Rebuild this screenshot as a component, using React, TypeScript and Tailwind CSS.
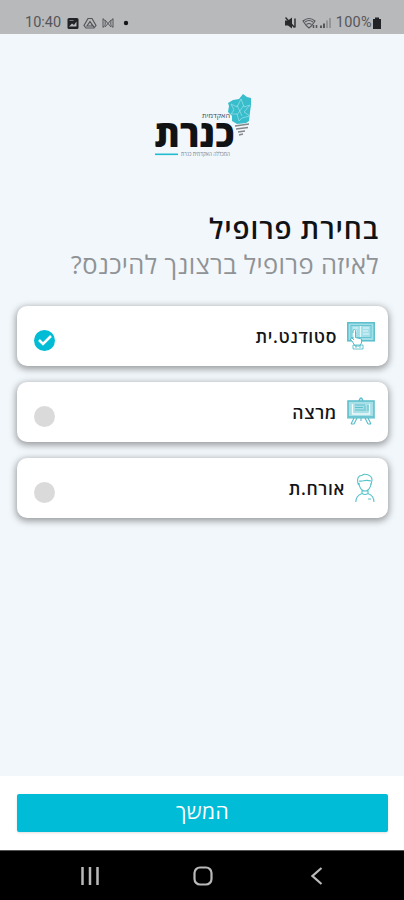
import { useState } from 'react';

const CYAN = '#00bcd7';

function StatusBar() {
  return (
    <header className="flex h-[34px] items-start bg-[#b8b9bb] pt-[14px] text-[#55565a]">
      <span className="ml-[25px] w-[42px] whitespace-nowrap font-[Roboto] text-[14.5px] leading-[18px]">10:40</span>
      <svg width="64" height="18" viewBox="0 0 64 18" fill="none" stroke="currentColor">
        <rect x="0.5" y="4" width="11" height="11" rx="1.5" fill="#222327" stroke="none" />
        <path d="M2 12.5l3-3 2 1.5 2.5-3.5v5z" fill="#b8b9bb" stroke="none" />
        <path d="M2.5 6.5h4" stroke="#77787a" />
        <path d="M21 4.5h4l4 7-2 2.5h-8l-2-2.5zM23 7.5l-3 4.5h6zM24 9.5l3 3.5" strokeWidth="1.2" />
        <path d="M36 4.5v9M36 5c3 0 3 8 0 8M46 4.5v9M46 5c-3 0-3 8 0 8M38 6l6 7M44 6l-6 7" strokeWidth="1" />
        <circle cx="59" cy="9" r="2.2" fill="#151619" stroke="none" />
      </svg>
      <svg className="ml-auto" width="50" height="18" viewBox="0 0 50 18" fill="none" stroke="currentColor">
        <path d="M0 6.5h3l4-3v11l-4-3H0z" fill="#292a2d" stroke="none" />
        <path d="M0.5 3.5l9 10M10 4.5v9" stroke="#292a2d" strokeWidth="1.4" />
        <path d="M18 7q6-5 12 0-3 5-6 7-3-2-6-7zM20 8q4-3 8 0M21.5 10.5q2.5-2 5 0" strokeWidth="1.1" />
        <path d="M28.5 11v3M31.5 11v3" strokeWidth="1.5" />
        <path d="M36 11.5v2.5M39 9.5v4.500" strokeWidth="2" />
        <path d="M42 6.5v7.5M45 4v10" stroke="#88898c" strokeWidth="1.5" />
      </svg>
      <span className="ml-px whitespace-nowrap font-[Roboto] text-[14.5px] leading-[18px] tracking-[0.3px]">100%</span>
      <svg className="mr-[22px]" width="10" height="18" viewBox="0 0 10 18">
        <path d="M3 3.5h4V5h2v10H1V5h2z" fill="#222327" />
      </svg>
    </header>
  );
}

function Logo() {
  return (
    <svg className="mx-auto mt-[56px] block" width="104" height="72" viewBox="150 90 104 72">
      <path d="M227 103l5-3 6-1 4-5 4 3 4 1v7l-1 7-1 9-3 2-9 1-5-3v-5l-4-4 1-6z" fill="#38bdcc" />
      <path
        d="M230 104l6 3 4-8 3 8 6-2-6 7 6 4-8 2-3 3-2-7-6 0 3-4zM236 105l5 11M243 105l-7 10"
        fill="none"
        stroke="#91dde3"
        strokeWidth="0.8"
      />
      <path d="M234 126l14-2M235 129l12-1.500M237 132l7-1M238 135l4-1" stroke="#85888b" strokeWidth="1.3" />
      <text x="229" y="118" direction="rtl" textLength="28" lengthAdjust="spacingAndGlyphs" fontFamily="Open Sans, DejaVu Sans, sans-serif" fontSize="7" fill="#42474b">האקדמית</text>
      <text x="233.500" y="146.500" direction="rtl" textLength="80" lengthAdjust="spacingAndGlyphs" fontFamily="Open Sans, DejaVu Sans, sans-serif" fontSize="37" fontWeight="800" fill="#111214">כנרת</text>
      <rect x="154" y="153.500" width="23" height="1.6" fill="#20bdd0" />
      <text x="229" y="155.500" direction="rtl" textLength="49" lengthAdjust="spacingAndGlyphs" fontFamily="Open Sans, DejaVu Sans, sans-serif" fontSize="5.5" fill="#7a8085">המכללה האקדמית כנרת</text>
    </svg>
  );
}

function StudentIcon() {
  return (
    <svg width="28" height="30" viewBox="0 0 28 30" fill="none" stroke="#58bdca">
      <rect x="0.8" y="1.8" width="26.4" height="18" fill="#a3dfe8" strokeWidth="1.5" />
      <rect x="4" y="4.5" width="20" height="12" strokeWidth="0.8" />
      <path d="M13.5 5v11M6 7h5M6 10h4M16 7h6M16 10h5M16 13h6" stroke="#e3f6f8" strokeWidth="1.1" />
      <path d="M6 12V9.5q1.5-2 2.500 0v7l6 1.500v4l-2 3H8l-3-5-2-2 2-1 2 2" fill="#fff" strokeWidth="1" />
      <path d="M6 24h10v4H6zM9 24v3M13 24v3" strokeWidth="0.9" />
    </svg>
  );
}

function LecturerIcon() {
  return (
    <svg width="28" height="30" viewBox="0 0 28 30" fill="none" stroke="#58bdca">
      <path d="M12 4q2-6 4 0" strokeWidth="1.3" />
      <rect x="1" y="4" width="26" height="16" fill="#a9dfe7" strokeWidth="1.5" />
      <path d="M5.5 7v10h17V7" stroke="#f0fafb" strokeWidth="1.3" />
      <path d="M8 8h10M8 10.5h8M8 13h9M18 9v5M21 8v6" strokeWidth="0.9" />
      <path d="M0 21h28M7 21l-3 6M10 21l-3 6M4 27h3M18 21l3 6M21 21l3 6M21 27h3M14 21v3" strokeWidth="1.1" />
    </svg>
  );
}

function GuestIcon() {
  return (
    <svg width="20" height="30" viewBox="0 0 20 30" fill="none" stroke="#55c4cb" strokeWidth="1.1">
      <path d="M3.5 12C1 5 4 2 7 2.500c2-2.500 10-1 10 4.500l-1 5M4 8c5 1 5-2 12 0M4 10c0 5 3 8 6 8s6-3 6-8M7 17v3M13 17v3" />
      <path d="M0.8 29c0-5 2-7 6.200-8.500q3 2 6 0c4 1.500 6 3.500 6 8.500M13 26h3" />
    </svg>
  );
}

const profiles = [
  { id: 'student', label: 'סטודנט.ית', icon: StudentIcon },
  { id: 'lecturer', label: 'מרצה', icon: LecturerIcon },
  { id: 'guest', label: 'אורח.ת', icon: GuestIcon },
];

export default function App() {
  const [selected, setSelected] = useState('student');

  return (
    <div dir="rtl" className="flex h-[900px] w-[404px] flex-col overflow-hidden bg-[#f2f7fb] font-['Open_Sans','DejaVu_Sans',sans-serif]">
      <div dir="ltr">
        <StatusBar />
      </div>

      <main className="flex-1 pr-4 pl-[17px]">
        <Logo />
        <h1 className="mt-[47px] pr-[9px] text-[28px] leading-[38px] font-semibold tracking-[0.9px] text-[#111214]">בחירת פרופיל</h1>
        <p className="pr-[9px] text-[25.5px] leading-[34px] tracking-[0.36px] whitespace-nowrap text-[#909396]">לאיזה פרופיל ברצונך להיכנס?</p>

        <div className="mt-[25px] flex flex-col gap-4">
          {profiles.map((profile) => {
            const Icon = profile.icon;
            const active = selected === profile.id;
            return (
              <button
                key={profile.id}
                onClick={() => setSelected(profile.id)}
                className="flex h-[60px] w-full items-center rounded-[10px] bg-white pr-[13px] pl-[17px] shadow-[0_2px_7px_1px_rgba(0,0,0,0.38)]"
              >
                <Icon />
                <span className="mr-[10px] text-[17.5px] leading-6 font-semibold tracking-[0.65px] text-[#141517]">{profile.label}</span>
                <span className={`mt-2 mr-auto flex size-[21px] items-center justify-center rounded-full ${active ? 'bg-[#00bcd4]' : 'bg-[#dadada]'}`}>
                  {active && (
                    <svg width="14" height="12" viewBox="0 0 14 12" fill="none" stroke="white" strokeWidth="2.5">
                      <path d="M1 6l4 4 8-8" />
                    </svg>
                  )}
                </span>
              </button>
            );
          })}
        </div>
      </main>

      <footer className="h-[74px] bg-white pt-[18px] pr-4 pl-[17px]">
        <button className="flex h-[38px] w-full justify-center rounded-[2px] text-[21px] leading-[35px] font-medium tracking-[0.4px] text-white shadow-sm" style={{ backgroundColor: CYAN }}>
          המשך
        </button>
      </footer>

      <nav dir="ltr" className="flex h-[50px] items-center border-t border-[#555] bg-black text-[#b9b9b9]">
        <svg className="ml-[81px]" width="18" height="18" viewBox="0 0 18 18" stroke="currentColor" strokeWidth="2.5">
          <path d="M1.5 0v18M9 0v18M16.5 0v18" />
        </svg>
        <svg className="ml-[94px]" width="20" height="20" viewBox="0 0 20 20" fill="none" stroke="currentColor" strokeWidth="2.2">
          <rect x="1.5" y="1.5" width="17" height="17" rx="5.5" />
        </svg>
        <svg className="ml-[98px]" width="12" height="18" viewBox="0 0 12 18" fill="none" stroke="currentColor" strokeWidth="2.2">
          <path d="M10.5 1L1.5 9l9 8" />
        </svg>
      </nav>
    </div>
  );
}
